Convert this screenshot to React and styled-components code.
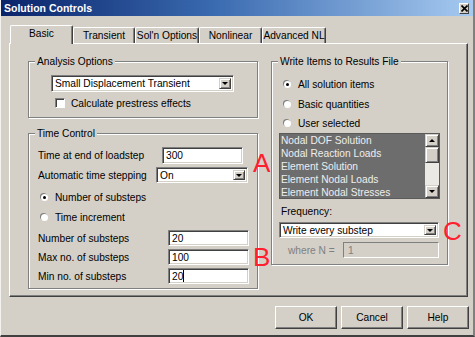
import React from 'react';
import styled, { createGlobalStyle } from 'styled-components';

const GlobalStyle = createGlobalStyle`
  html, body {
    margin: 0;
    padding: 0;
    background: #d4d0c8;
  }
  * {
    box-sizing: border-box;
  }
`;

const c = {
  face: '#d4d0c8',
  shadow: '#808080',
  dark: '#404040',
  light: '#ffffff',
  red: '#ff1f2f',
};

const fs = '10.2px';

const App = () => {
  return (
    <>
      <GlobalStyle />
      <Window>
        <TitleBar>
          <Title>Solution Controls</Title>
          <CloseButton>
            <svg width="7" height="7" viewBox="0 0 7 7">
              <path d="M0.5 0.5 L6.5 6.5 M6.5 0.5 L0.5 6.5" stroke="#000" strokeWidth="1.6" />
            </svg>
          </CloseButton>
        </TitleBar>

        <Tabs>
          <Tab $active $w={63}>Basic</Tab>
          <Tab $w={62}>Transient</Tab>
          <Tab $w={64}>Sol'n Options</Tab>
          <Tab $w={63}>Nonlinear</Tab>
          <Tab $w={64}>Advanced NL</Tab>
        </Tabs>

        <Panel>
          <LeftColumn>
            <Group $h={63}>
              <Legend>Analysis Options</Legend>
              <AnalysisBody>
                <Select $w={183}>
                  <SelectText>Small Displacement Transient</SelectText>
                  <DropArrow />
                </Select>
                <CheckRow>
                  <CheckBox />
                  <span>Calculate prestress effects</span>
                </CheckRow>
              </AnalysisBody>
            </Group>

            <Group $h={162}>
              <Legend>Time Control</Legend>
              <TimeBody>
                <FieldRow $labelWidth={124} $h={17}>
                  <FieldLabel>Time at end of loadstep</FieldLabel>
                  <Input $w={81}>300</Input>
                </FieldRow>
                <FieldRow $labelWidth={118} $h={16} $mt={3}>
                  <FieldLabel>Automatic time stepping</FieldLabel>
                  <Select $w={92} $h={16}>
                    <SelectText>On</SelectText>
                    <DropArrow />
                  </Select>
                </FieldRow>
                <RadioRow $mt={4} $indent={3}>
                  <Radio $checked />
                  <span>Number of substeps</span>
                </RadioRow>
                <RadioRow $indent={3}>
                  <Radio />
                  <span>Time increment</span>
                </RadioRow>
                <FieldRow $labelWidth={130} $h={16} $mt={3}>
                  <FieldLabel>Number of substeps</FieldLabel>
                  <Input $w={81}>20</Input>
                </FieldRow>
                <FieldRow $labelWidth={130} $h={16} $mt={3}>
                  <FieldLabel>Max no. of substeps</FieldLabel>
                  <Input $w={81}>100</Input>
                </FieldRow>
                <FieldRow $labelWidth={130} $h={16} $mt={3}>
                  <FieldLabel>Min no. of substeps</FieldLabel>
                  <Input $w={81}>20<Caret /></Input>
                </FieldRow>
              </TimeBody>
            </Group>
          </LeftColumn>

          <Group $h={210}>
            <Legend>Write Items to Results File</Legend>
            <ResultsBody>
              <RadioRow $mt={6} $indent={5}>
                <Radio $checked />
                <span>All solution items</span>
              </RadioRow>
              <RadioRow $indent={5}>
                <Radio />
                <span>Basic quantities</span>
              </RadioRow>
              <RadioRow $indent={5} $h={19}>
                <Radio />
                <span>User selected</span>
              </RadioRow>
              <ListBox>
                <ListItems>
                  <ListItem>Nodal DOF Solution</ListItem>
                  <ListItem>Nodal Reaction Loads</ListItem>
                  <ListItem>Element Solution</ListItem>
                  <ListItem>Element Nodal Loads</ListItem>
                  <ListItem>Element Nodal Stresses</ListItem>
                </ListItems>
                <ScrollBar>
                  <ScrollButton><Arrow $up /></ScrollButton>
                  <Thumb />
                  <Track />
                  <ScrollButton><Arrow /></ScrollButton>
                </ScrollBar>
              </ListBox>
              <FreqLabel>Frequency:</FreqLabel>
              <Select $w={160} $h={16}>
                <SelectText>Write every substep</SelectText>
                <DropArrow />
              </Select>
              <WhereRow>
                <DisabledText>where N =</DisabledText>
                <DisabledInput>1</DisabledInput>
              </WhereRow>
            </ResultsBody>
          </Group>

          <Note $x={243} $y={106}>A</Note>
          <Note $x={243} $y={200}>B</Note>
          <Note $x={433} $y={174}>C</Note>
        </Panel>

        <ButtonRow>
          <Button>OK</Button>
          <Button>Cancel</Button>
          <Button>Help</Button>
        </ButtonRow>
      </Window>
    </>
  );
};

export default App;

// arrow glyph inside the small raised buttons
const DropArrow = () => (
  <ArrowButton>
    <Arrow />
  </ArrowButton>
);

// Styling
const Window = styled.div`
  width: 475px;
  height: 337px;
  background: ${c.face};
  border-left: 1px solid #f4f2ee;
  border-right: 2px solid ${c.shadow};
  border-bottom: 2px solid ${c.dark};
  font-family: "Liberation Sans", Arial, sans-serif;
  font-size: ${fs};
  color: #000;
  display: flex;
  flex-direction: column;
  overflow: hidden;
`;

const TitleBar = styled.div`
  height: 16px;
  flex: none;
  display: flex;
  align-items: center;
  justify-content: space-between;
  padding: 0 3px 0 3px;
  background: linear-gradient(90deg, #0a246a 0%, #3a6ab0 45%, #a6caf0 100%);
`;

const Title = styled.div`
  color: #fff;
  font-weight: bold;
  font-size: 10.5px;
`;

const CloseButton = styled.div`
  width: 10px;
  height: 11px;
  margin-right: 1px;
  display: flex;
  align-items: center;
  justify-content: center;
  background: ${c.face};
  border-top: 1px solid #fff;
  border-left: 1px solid #fff;
  border-right: 1px solid ${c.dark};
  border-bottom: 1px solid ${c.dark};
`;

const Tabs = styled.div`
  display: flex;
  align-items: flex-end;
  height: 18px;
  margin: 9px 0 0 9px;
  position: relative;
  z-index: 2;
`;

const Tab = styled.div`
  width: ${({ $w }) => $w}px;
  height: ${({ $active }) => ($active ? 19 : 16)}px;
  margin-bottom: ${({ $active }) => ($active ? -1 : 0)}px;
  display: flex;
  align-items: center;
  justify-content: center;
  padding-bottom: ${({ $active }) => ($active ? 3 : 0)}px;
  background: ${c.face};
  border-top: 1px solid #fff;
  border-left: 1px solid #fff;
  border-right: 1px solid ${c.dark};
  box-shadow: inset -1px 0 0 ${c.shadow};
  border-radius: 2px 2px 0 0;
  white-space: nowrap;
`;

const Panel = styled.div`
  position: relative;
  margin-left: 8px;
  width: 459px;
  height: 254px;
  flex: none;
  display: grid;
  grid-template-columns: 230px 177px;
  column-gap: 13px;
  align-items: start;
  padding: 11px 0 0 18px;
  border-top: 1px solid #fff;
  border-left: 1px solid #fff;
  border-right: 1px solid ${c.dark};
  border-bottom: 1px solid ${c.dark};
  box-shadow: inset -1px -1px 0 ${c.shadow};
`;

const LeftColumn = styled.div`
  display: flex;
  flex-direction: column;
  gap: 9px;
`;

const Group = styled.fieldset`
  margin: 0;
  padding: 0;
  min-inline-size: 0;
  height: ${({ $h }) => $h}px;
  border: 1px solid ${c.shadow};
  box-shadow: inset 1px 1px 0 #fff, 1px 1px 0 #fff;
`;

const Legend = styled.legend`
  margin-left: 6px;
  padding: 0 2px;
  line-height: 13px;
  background: ${c.face};
`;

const AnalysisBody = styled.div`
  display: flex;
  flex-direction: column;
  padding: 7px 0 0 22px;
`;

const CheckRow = styled.div`
  display: flex;
  align-items: center;
  gap: 6px;
  margin: 5px 0 0 4px;
  height: 12px;
`;

const CheckBox = styled.div`
  width: 10px;
  height: 10px;
  background: #fff;
  border-top: 1px solid ${c.shadow};
  border-left: 1px solid ${c.shadow};
  border-right: 1px solid #fff;
  border-bottom: 1px solid #fff;
  box-shadow: inset 1px 1px 0 ${c.dark};
`;

const TimeBody = styled.div`
  display: flex;
  flex-direction: column;
  padding: 7px 0 0 9px;
`;

const FieldRow = styled.div`
  display: grid;
  grid-template-columns: ${({ $labelWidth }) => $labelWidth}px auto;
  align-items: center;
  height: ${({ $h }) => $h}px;
  margin-top: ${({ $mt }) => $mt || 0}px;
`;

const FieldLabel = styled.span`
  white-space: nowrap;
`;

const sunken = `
  background: #fff;
  border-top: 1px solid ${c.shadow};
  border-left: 1px solid ${c.shadow};
  border-right: 1px solid #fff;
  border-bottom: 1px solid #fff;
  box-shadow: inset 1px 1px 0 ${c.dark}, inset -1px -1px 0 ${c.face};
`;

const Input = styled.div`
  ${sunken}
  width: ${({ $w }) => $w}px;
  height: 100%;
  display: flex;
  align-items: center;
  padding-left: 3px;
`;

const Caret = styled.span`
  display: inline-block;
  width: 1px;
  height: 12px;
  background: #000;
`;

const Select = styled.div`
  ${sunken}
  width: ${({ $w }) => $w}px;
  height: ${({ $h }) => $h || 17}px;
  display: flex;
  align-items: center;
  justify-content: space-between;
  padding: 2px 2px 2px 3px;
`;

const SelectText = styled.span`
  white-space: nowrap;
`;

const ArrowButton = styled.div`
  width: 12px;
  height: 100%;
  display: flex;
  align-items: center;
  justify-content: center;
  background: ${c.face};
  border-top: 1px solid ${c.face};
  border-left: 1px solid ${c.face};
  border-right: 1px solid ${c.dark};
  border-bottom: 1px solid ${c.dark};
  box-shadow: inset 1px 1px 0 #fff, inset -1px -1px 0 ${c.shadow};
`;

const Arrow = styled.div`
  width: 0;
  height: 0;
  border-left: 3px solid transparent;
  border-right: 3px solid transparent;
  ${({ $up }) => ($up ? 'border-bottom: 3px solid #000;' : 'border-top: 3px solid #000;')}
`;

const RadioRow = styled.div`
  display: flex;
  align-items: center;
  gap: 7px;
  height: ${({ $h }) => $h || 20}px;
  margin-top: ${({ $mt }) => $mt || 0}px;
  padding-left: ${({ $indent }) => $indent || 0}px;
`;

const Radio = styled.div`
  width: 7px;
  height: 7px;
  border-radius: 50%;
  background: #fff;
  box-shadow: -1px -1px 0 ${c.shadow};
  display: flex;
  align-items: center;
  justify-content: center;

  &::after {
    content: '';
    width: 3px;
    height: 3px;
    border-radius: 50%;
    background: ${({ $checked }) => ($checked ? '#000' : 'transparent')};
  }
`;

const ResultsBody = styled.div`
  display: flex;
  flex-direction: column;
  padding: 0 0 0 7px;
`;

const ListBox = styled.div`
  width: 161px;
  height: 66px;
  display: flex;
  background: #6d6d6d;
  border: 1px solid #5a5a5a;
`;

const ListItems = styled.div`
  flex: 1;
  display: flex;
  flex-direction: column;
`;

const ListItem = styled.div`
  height: 13px;
  line-height: 13px;
  padding-left: 1px;
  color: #ededed;
  white-space: nowrap;
`;

const ScrollBar = styled.div`
  width: 14px;
  display: flex;
  flex-direction: column;
`;

const ScrollButton = styled.div`
  height: 13px;
  display: flex;
  align-items: center;
  justify-content: center;
  background: ${c.face};
  border-top: 1px solid ${c.face};
  border-left: 1px solid ${c.face};
  border-right: 1px solid ${c.dark};
  border-bottom: 1px solid ${c.dark};
  box-shadow: inset 1px 1px 0 #fff, inset -1px -1px 0 ${c.shadow};
`;

const Thumb = styled(ScrollButton)`
  height: 16px;
`;

const Track = styled.div`
  flex: 1;
  background: #ebe9e4;
`;

const FreqLabel = styled.div`
  height: 13px;
  line-height: 13px;
  margin: 6px 0 4px 2px;
`;

const WhereRow = styled.div`
  display: flex;
  align-items: center;
  justify-content: space-between;
  width: 160px;
  height: 16px;
  margin-top: 4px;
  padding-left: 9px;
`;

const DisabledText = styled.span`
  color: ${c.shadow};
`;

const DisabledInput = styled.div`
  width: 96px;
  height: 16px;
  display: flex;
  align-items: center;
  padding-left: 4px;
  color: ${c.shadow};
  background: ${c.face};
  border-top: 1px solid ${c.shadow};
  border-left: 1px solid ${c.shadow};
  border-right: 1px solid #fff;
  border-bottom: 1px solid #fff;
`;

// hand-written red annotation letters drawn over the dialog
const Note = styled.div`
  position: absolute;
  left: ${({ $x }) => $x}px;
  top: ${({ $y }) => $y}px;
  color: ${c.red};
  font-family: "Liberation Sans", Arial, sans-serif;
  font-size: 26px;
  line-height: 26px;
  font-weight: normal;
`;

const ButtonRow = styled.div`
  display: flex;
  justify-content: flex-end;
  gap: 4px;
  margin-top: 9px;
  padding-right: 4px;
`;

const Button = styled.div`
  width: 62px;
  height: 23px;
  display: flex;
  align-items: center;
  justify-content: center;
  background: ${c.face};
  border-top: 1px solid #fff;
  border-left: 1px solid #fff;
  border-right: 1px solid ${c.dark};
  border-bottom: 1px solid ${c.dark};
  box-shadow: inset -1px -1px 0 ${c.shadow};
`;
